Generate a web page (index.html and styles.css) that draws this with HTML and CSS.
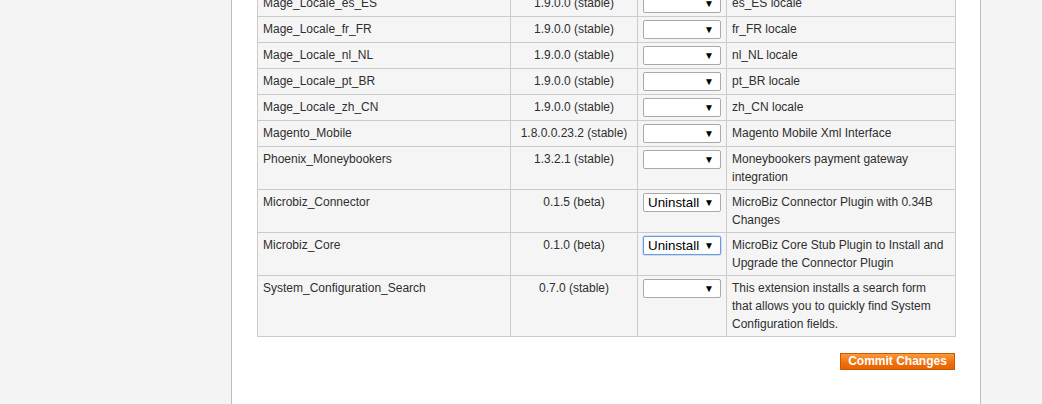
FILE: index.html
```html
<!DOCTYPE html>
<html>
<head>
<meta charset="utf-8">
<link rel="stylesheet" href="styles.css">
</head>
<body>
<div class="page">
  <div class="side"></div>
  <div class="main">
    <table class="grid">
      <colgroup>
        <col class="c1"><col class="c2"><col class="c3"><col class="c4">
      </colgroup>
      <tbody>
        <tr><td>Mage_Locale_es_ES</td><td class="ver">1.9.0.0 (stable)</td><td><div class="sel"><span class="val"></span><span class="arr">▼</span></div></td><td>es_ES locale</td></tr>
        <tr><td>Mage_Locale_fr_FR</td><td class="ver">1.9.0.0 (stable)</td><td><div class="sel"><span class="val"></span><span class="arr">▼</span></div></td><td>fr_FR locale</td></tr>
        <tr><td>Mage_Locale_nl_NL</td><td class="ver">1.9.0.0 (stable)</td><td><div class="sel"><span class="val"></span><span class="arr">▼</span></div></td><td>nl_NL locale</td></tr>
        <tr><td>Mage_Locale_pt_BR</td><td class="ver">1.9.0.0 (stable)</td><td><div class="sel"><span class="val"></span><span class="arr">▼</span></div></td><td>pt_BR locale</td></tr>
        <tr><td>Mage_Locale_zh_CN</td><td class="ver">1.9.0.0 (stable)</td><td><div class="sel"><span class="val"></span><span class="arr">▼</span></div></td><td>zh_CN locale</td></tr>
        <tr><td>Magento_Mobile</td><td class="ver">1.8.0.0.23.2 (stable)</td><td><div class="sel"><span class="val"></span><span class="arr">▼</span></div></td><td>Magento Mobile Xml Interface</td></tr>
        <tr><td>Phoenix_Moneybookers</td><td class="ver">1.3.2.1 (stable)</td><td><div class="sel"><span class="val"></span><span class="arr">▼</span></div></td><td>Moneybookers payment gateway integration</td></tr>
        <tr><td>Microbiz_Connector</td><td class="ver">0.1.5 (beta)</td><td><div class="sel"><span class="val">Uninstall</span><span class="arr">▼</span></div></td><td>MicroBiz Connector Plugin with 0.34B Changes</td></tr>
        <tr><td>Microbiz_Core</td><td class="ver">0.1.0 (beta)</td><td><div class="sel focus"><span class="val">Uninstall</span><span class="arr">▼</span></div></td><td>MicroBiz Core Stub Plugin to Install and Upgrade the Connector Plugin</td></tr>
        <tr><td>System_Configuration_Search</td><td class="ver">0.7.0 (stable)</td><td><div class="sel"><span class="val"></span><span class="arr">▼</span></div></td><td>This extension installs a search form that allows you to quickly find System Configuration fields.</td></tr>
      </tbody>
    </table>
    <div class="actions">
      <button class="btn">Commit Changes</button>
    </div>
  </div>
  <div class="side rest"></div>
</div>
</body>
</html>
```

FILE: styles.css
```css
html, body {
  margin: 0;
  padding: 0;
  height: 100%;
  overflow: hidden;
}
body {
  font-family: "Liberation Sans", Arial, sans-serif;
  font-size: 12px;
  color: #2f2f2f;
  background: #f4f4f4;
}
.page {
  display: flex;
  height: 404px;
}
.side {
  width: 231px;
  background: #f4f4f4;
  flex: none;
}
.side.rest {
  flex: 1;
  width: auto;
}
.main {
  flex: none;
  background: #fff;
  border-left: 1px solid #bdbdbd;
  border-right: 1px solid #bdbdbd;
  padding: 0 24px 0 25px;
  box-sizing: border-box;
  width: 750px;
}
.grid {
  margin-top: -10px;
  width: 698px;
  border-collapse: collapse;
  table-layout: fixed;
  background: #f5f5f5;
  border: 1px solid #c8c8c8;
}
.c1 { width: 253px; }
.c2 { width: 127px; }
.c3 { width: 89px; }
.c4 { width: 229px; }
.grid td {
  border: 1px solid #cbcbcb;
  padding: 3px 6px 3px 5px;
  line-height: 18px;
  vertical-align: top;
}
.grid td.ver {
  text-align: center;
  padding-left: 4px;
  padding-right: 4px;
}
.sel {
  box-sizing: border-box;
  width: 78px;
  height: 19px;
  background: #fff;
  border: 1px solid #a9a9a9;
  border-radius: 2px;
  display: flex;
  align-items: center;
  padding: 0 6px 0 4px;
  font-size: 13.33px;
  color: #000;
}
.sel.focus {
  border-color: #6b9be0;
  box-shadow: 0 0 0 0.5px #a6c4ef;
}
.sel .val {
  flex: 1;
  line-height: 17px;
}
.sel .arr {
  font-size: 10px;
  line-height: 17px;
}
.actions {
  display: flex;
  justify-content: flex-end;
  width: 698px;
  margin-top: 16px;
}
.btn {
  font-family: "Liberation Sans", Arial, sans-serif;
  font-size: 12px;
  font-weight: bold;
  color: #fff;
  height: 17px;
  width: 115px;
  padding: 0 0 1px;
  line-height: 14px;
  background: linear-gradient(#fb9a3a, #ee6f0b 60%, #e96300);
  border: 1px solid #c75a05;
  cursor: pointer;
}
```
